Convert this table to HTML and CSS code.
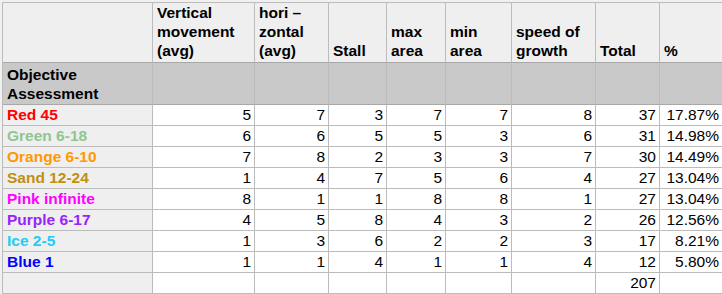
FILE: index.html
```html
<!DOCTYPE html>
<html>
<head>
<meta charset="utf-8">
<link rel="stylesheet" href="styles.css">
</head>
<body>
<table class="sheet">
  <colgroup>
    <col class="c-label"><col class="c-vert"><col class="c-hori"><col class="c-stall"><col class="c-max"><col class="c-min"><col class="c-speed"><col class="c-total"><col class="c-pct">
  </colgroup>
  <tr class="head1">
    <td class="lab"></td>
    <td>Vertical movement (avg)</td>
    <td>hori&nbsp;–<br>zontal (avg)</td>
    <td>Stall</td>
    <td>max area</td>
    <td>min area</td>
    <td>speed of growth</td>
    <td>Total</td>
    <td>%</td>
  </tr>
  <tr class="head2">
    <td>Objective Assessment</td>
    <td></td><td></td><td></td><td></td><td></td><td></td><td></td><td></td>
  </tr>
  <tr class="row"><td class="lab red">Red 45</td><td>5</td><td>7</td><td>3</td><td>7</td><td>7</td><td>8</td><td>37</td><td>17.87%</td></tr>
  <tr class="row"><td class="lab green">Green 6-18</td><td>6</td><td>6</td><td>5</td><td>5</td><td>3</td><td>6</td><td>31</td><td>14.98%</td></tr>
  <tr class="row"><td class="lab orange">Orange 6-10</td><td>7</td><td>8</td><td>2</td><td>3</td><td>3</td><td>7</td><td>30</td><td>14.49%</td></tr>
  <tr class="row"><td class="lab sand">Sand 12-24</td><td>1</td><td>4</td><td>7</td><td>5</td><td>6</td><td>4</td><td>27</td><td>13.04%</td></tr>
  <tr class="row"><td class="lab pink">Pink infinite</td><td>8</td><td>1</td><td>1</td><td>8</td><td>8</td><td>1</td><td>27</td><td>13.04%</td></tr>
  <tr class="row"><td class="lab purple">Purple 6-17</td><td>4</td><td>5</td><td>8</td><td>4</td><td>3</td><td>2</td><td>26</td><td>12.56%</td></tr>
  <tr class="row"><td class="lab ice">Ice 2-5</td><td>1</td><td>3</td><td>6</td><td>2</td><td>2</td><td>3</td><td>17</td><td>8.21%</td></tr>
  <tr class="row"><td class="lab blue">Blue 1</td><td>1</td><td>1</td><td>4</td><td>1</td><td>1</td><td>4</td><td>12</td><td>5.80%</td></tr>
  <tr class="row"><td class="lab"></td><td></td><td></td><td></td><td></td><td></td><td></td><td>207</td><td></td></tr>
</table>
</body>
</html>
```
FILE: styles.css
```css
html, body {
  margin: 0;
  padding: 0;
  overflow: hidden;
  background: #f0f0f0;
}
body {
  padding: 2px 0 0 2px;
  font-family: "Liberation Sans", Arial, sans-serif;
  font-size: 15.5px;
  color: #000;
}
.sheet {
  table-layout: fixed;
  border-collapse: separate;
  border-spacing: 0;
  width: 721px;
  border-top: 1px solid #bcbcbc;
  border-left: 1px solid #bcbcbc;
}
.c-label { width: 150px; }
.c-vert { width: 102px; }
.c-hori { width: 74px; }
.c-stall { width: 58px; }
.c-max { width: 59px; }
.c-min { width: 66px; }
.c-speed { width: 84px; }
.c-total { width: 64px; }
.c-pct { width: 63px; }

.sheet td {
  border-right: 1px solid #bcbcbc;
  border-bottom: 1px solid #bcbcbc;
  padding: 0 4px;
  box-sizing: border-box;
  overflow: hidden;
  white-space: nowrap;
}
.head1 { height: 60px; }
.head1 td {
  background: #efefef;
  font-weight: bold;
  vertical-align: bottom;
  line-height: 19px;
  white-space: normal;
  padding-bottom: 2px;
  border-bottom-color: #a8a8a8;
}
.head2 { height: 42px; }
.head2 td {
  background: #c9c9c9;
  font-weight: bold;
  vertical-align: top;
  line-height: 19px;
  white-space: normal;
  padding-top: 2px;
  border-bottom-color: #a8a8a8;
}
.row { height: 21px; }
.row td {
  background: #fff;
  text-align: right;
  vertical-align: bottom;
  line-height: 18px;
  padding: 0 3px 1px 2px;
}
.row td.lab {
  background: #efefef;
  text-align: left;
  font-weight: bold;
  padding-left: 4px;
}
.red { color: #ff0000; }
.green { color: #8fc68f; }
.orange { color: #ff9900; }
.sand { color: #c09010; }
.pink { color: #ff00ff; }
.purple { color: #9922ff; }
.ice { color: #22ccf5; }
.blue { color: #0000ff; }
```
